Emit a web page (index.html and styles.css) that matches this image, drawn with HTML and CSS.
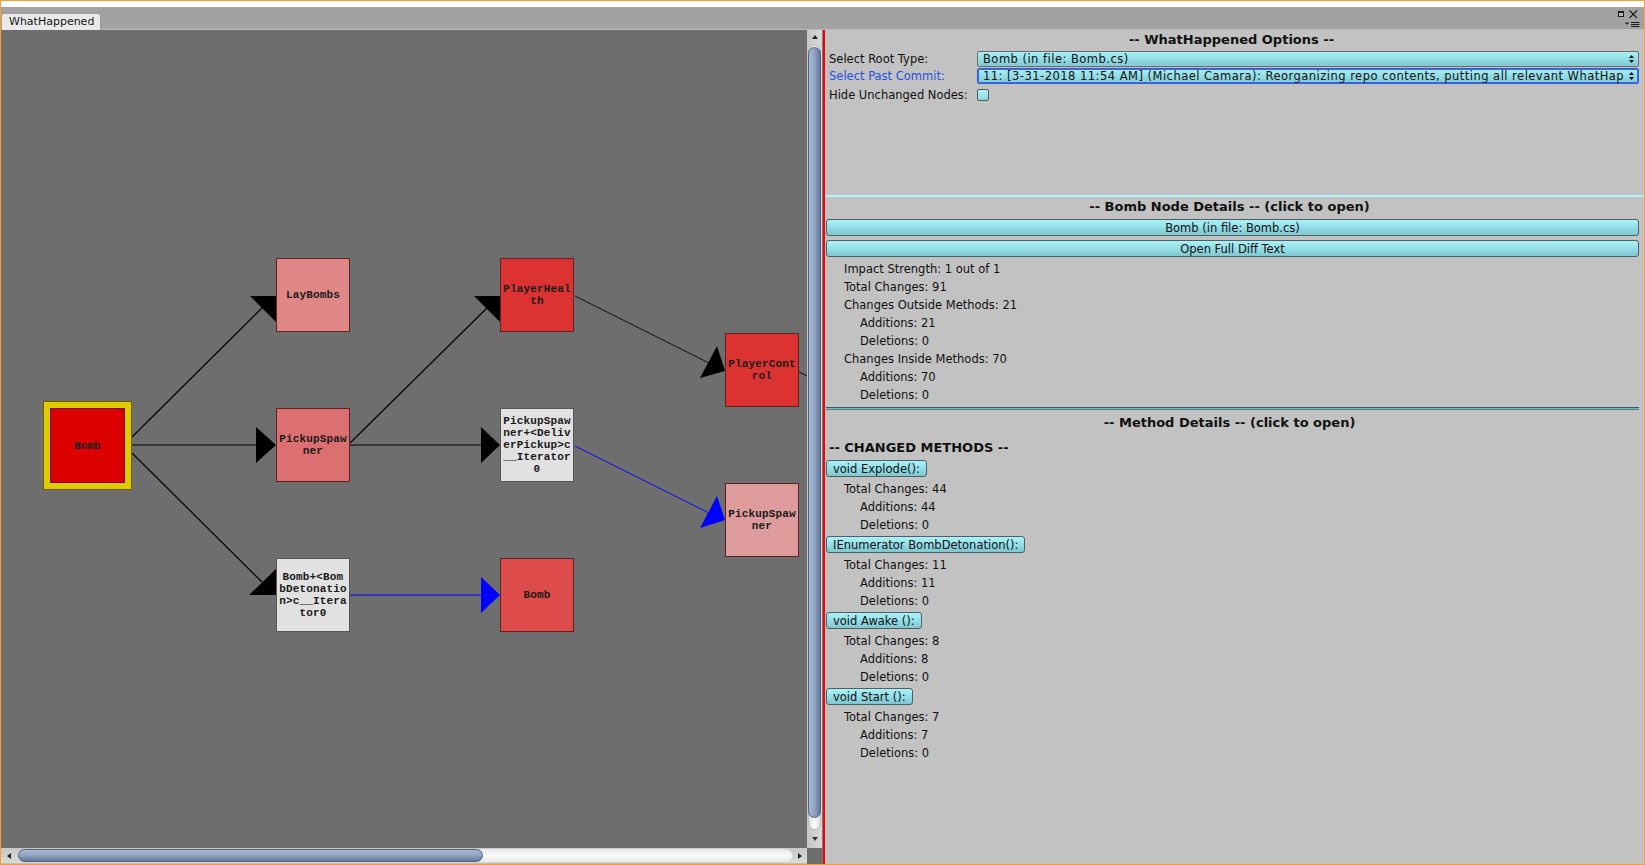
FILE: index.html
```html
<!DOCTYPE html>
<html>
<head>
<meta charset="utf-8">
<title>WhatHappened</title>
<link rel="stylesheet" href="styles.css">
</head>
<body>
<div class="frame">
  <div class="topstrip"></div>
  <div class="tabbar">
    <div class="tab">WhatHappened</div>
    <svg class="winctl" width="24" height="20" viewBox="0 0 24 20">
      <rect x="1" y="2" width="6" height="6" fill="#1e1e1e"/>
      <rect x="2" y="4" width="4" height="3" fill="#b9b9b9"/>
      <path d="M12.5 1.5 L20 9 M20 1.5 L12.5 9" stroke="#1e1e1e" stroke-width="1.1" fill="none"/>
      <path d="M8 13.5 L12 13.5 L10 16 Z" fill="#1e1e1e"/>
      <path d="M14 13.5 H22.5 M14 15.5 H22.5 M14 17.5 H22.5" stroke="#1e1e1e" stroke-width="1" fill="none"/>
    </svg>
  </div>
  <div class="main">
    <div class="graphpane">
      <div class="canvas">
        <svg class="edges" width="806" height="818" viewBox="0 0 806 818">
          <g stroke="#000" stroke-width="1.2" fill="none">
            <line x1="131" y1="407" x2="262" y2="277"/>
            <line x1="131" y1="415" x2="256" y2="415"/>
            <line x1="131" y1="423" x2="261" y2="552"/>
            <line x1="349" y1="413" x2="486" y2="278"/>
            <line x1="349" y1="415" x2="481" y2="415"/>
          </g>
          <g stroke="#000" stroke-width="0.9" fill="none">
            <line x1="574" y1="266" x2="708" y2="333"/>
            <line x1="798" y1="342" x2="806" y2="346"/>
          </g>
          <line x1="349" y1="565" x2="481" y2="565" stroke="#0000ff" stroke-width="1.1"/>
          <line x1="574" y1="416" x2="708" y2="483" stroke="#0000ff" stroke-width="0.9"/>
          <g fill="#000">
            <polygon points="249,266 275,266 275,292"/>
            <polygon points="255,397 255,433 275,415"/>
            <polygon points="248,565 275,539 275,565"/>
            <polygon points="473,266 499,266 499,292"/>
            <polygon points="480,397 480,433 499,415"/>
            <polygon points="716,316 699,348 724,341"/>
          </g>
          <g fill="#0000ff">
            <polygon points="480,547 480,583 499,565"/>
            <polygon points="716,466 699,498 724,490"/>
          </g>
        </svg>
        <div class="root-frame"><div class="node-inner">Bomb</div></div>
        <div class="node n-laybombs c-pink">LayBombs</div>
        <div class="node n-spawner c-salmon">PickupSpaw<br>ner</div>
        <div class="node n-detonation c-white">Bomb+&lt;Bom<br>bDetonatio<br>n&gt;c__Itera<br>tor0</div>
        <div class="node n-health c-red">PlayerHeal<br>th</div>
        <div class="node n-deliver c-white">PickupSpaw<br>ner+&lt;Deliv<br>erPickup&gt;c<br>__Iterator<br>0</div>
        <div class="node n-bomb2 c-red2">Bomb</div>
        <div class="node n-control c-red">PlayerCont<br>rol</div>
        <div class="node n-spawner2 c-rose">PickupSpaw<br>ner</div>
      </div>
      <div class="vscroll">
        <div class="sb-btn"><span class="tri-up"></span></div>
        <div class="vtrack"><div class="vthumb"></div></div>
        <div class="sb-btn sb-btn-down"><span class="tri-down"></span></div>
      </div>
      <div class="hscroll">
        <div class="sb-hbtn"><span class="tri-left"></span></div>
        <div class="htrack"><div class="hthumb"></div></div>
        <div class="sb-hbtn"><span class="tri-right"></span></div>
      </div>
      <div class="corner"></div>
    </div>
    <div class="divider"></div>
    <div class="panel">
      <section class="options">
        <div class="ptitle">-- WhatHappened Options --</div>
        <div class="field f1">
          <span class="flabel">Select Root Type:</span>
          <div class="dropdown"><span class="dd-text">Bomb (in file: Bomb.cs)</span><svg class="updown" width="5" height="8" viewBox="0 0 5 8"><path d="M2.5 0 L5 3 H0 Z M2.5 8 L5 5 H0 Z" fill="#111"/></svg></div>
        </div>
        <div class="field f2">
          <span class="flabel flabel-active">Select Past Commit:</span>
          <div class="dropdown dropdown-focus"><span class="dd-text">11: [3-31-2018 11:54 AM] (Michael Camara): Reorganizing repo contents, putting all relevant WhatHap</span><svg class="updown" width="5" height="8" viewBox="0 0 5 8"><path d="M2.5 0 L5 3 H0 Z M2.5 8 L5 5 H0 Z" fill="#111"/></svg></div>
        </div>
        <div class="field f3">
          <span class="flabel">Hide Unchanged Nodes:</span>
          <span class="checkbox"></span>
        </div>
      </section>
      <div class="sep-light"></div>
      <section class="details">
        <div class="ptitle t2">-- Bomb Node Details -- (click to open)</div>
        <div class="wbtn wb1">Bomb (in file: Bomb.cs)</div>
        <div class="wbtn wb2">Open Full Diff Text</div>
        <div class="rows r-first">
          <div class="row l1">Impact Strength: 1 out of 1</div>
          <div class="row l1">Total Changes: 91</div>
          <div class="row l1">Changes Outside Methods: 21</div>
          <div class="row l2">Additions: 21</div>
          <div class="row l2">Deletions: 0</div>
          <div class="row l1">Changes Inside Methods: 70</div>
          <div class="row l2">Additions: 70</div>
          <div class="row l2">Deletions: 0</div>
        </div>
      </section>
      <div class="sep-dark"></div>
      <section class="methods">
        <div class="ptitle t3">-- Method Details -- (click to open)</div>
        <div class="changed">-- CHANGED METHODS --</div>
        <div class="method">
          <div class="mbtn">void Explode():</div>
          <div class="row l1">Total Changes: 44</div>
          <div class="row l2">Additions: 44</div>
          <div class="row l2">Deletions: 0</div>
        </div>
        <div class="method">
          <div class="mbtn">IEnumerator BombDetonation():</div>
          <div class="row l1">Total Changes: 11</div>
          <div class="row l2">Additions: 11</div>
          <div class="row l2">Deletions: 0</div>
        </div>
        <div class="method">
          <div class="mbtn">void Awake ():</div>
          <div class="row l1">Total Changes: 8</div>
          <div class="row l2">Additions: 8</div>
          <div class="row l2">Deletions: 0</div>
        </div>
        <div class="method">
          <div class="mbtn">void Start ():</div>
          <div class="row l1">Total Changes: 7</div>
          <div class="row l2">Additions: 7</div>
          <div class="row l2">Deletions: 0</div>
        </div>
      </section>
    </div>
  </div>
</div>
</body>
</html>
```

FILE: styles.css
```css
* { box-sizing: border-box; }
html, body { margin: 0; padding: 0; }
body {
  width: 1645px;
  height: 865px;
  overflow: hidden;
  background: #fff;
  font-family: "DejaVu Sans", "Verdana", sans-serif;
  font-size: 11.5px;
  color: #111;
}
.frame {
  width: 1645px;
  height: 865px;
  border: 1px solid #f5a235;
  display: flex;
  flex-direction: column;
}
.topstrip { height: 6px; flex: none; background: #fff; }
.tabbar {
  height: 23px;
  flex: none;
  background: #a2a2a2;
  border-bottom: 1px solid #bdbdbd;
  display: flex;
  justify-content: space-between;
  align-items: flex-end;
}
.tab {
  height: 17px;
  margin-bottom: -1px;
  padding: 0 6px 0 7px;
  line-height: 16px;
  background: #e9e9e9;
  border: 1px solid #9c9c9c;
  border-bottom: none;
  border-radius: 3px 3px 0 0;
  color: #151515;
  font-size: 11px;
}
.winctl { align-self: flex-start; margin-top: 2px; margin-right: 3px; }

.main { flex: 1; display: flex; min-height: 0; }
.graphpane {
  width: 822px;
  flex: none;
  display: grid;
  grid-template-columns: 806px 16px;
  grid-template-rows: 818px 1fr;
}
.canvas { position: relative; background: #6e6e6e; overflow: hidden; }
.edges { position: absolute; left: 0; top: 0; }

.node {
  position: absolute;
  width: 74px;
  height: 74px;
  border: 1px solid #5e2323;
  display: flex;
  align-items: center;
  justify-content: center;
  text-align: center;
  font: bold 11px/12px "Liberation Mono", "DejaVu Sans Mono", monospace;
  color: #1a1a1a;
  letter-spacing: 0.15px;
}
.root-frame {
  position: absolute;
  left: 42px;
  top: 371px;
  width: 89px;
  height: 89px;
  padding: 6px;
  background: #dfcb00;
  border: 1px solid #6a6000;
}
.node-inner {
  width: 75px;
  height: 75px;
  background: #dd0000;
  border: 1px solid #6b1212;
  display: flex;
  align-items: center;
  justify-content: center;
  font: bold 11px/12px "Liberation Mono", "DejaVu Sans Mono", monospace;
  color: #1a1a1a;
}
.n-laybombs { left: 275px; top: 228px; }
.n-spawner { left: 275px; top: 378px; }
.n-detonation { left: 275px; top: 528px; }
.n-health { left: 499px; top: 228px; }
.n-deliver { left: 499px; top: 378px; }
.n-bomb2 { left: 499px; top: 528px; }
.n-control { left: 724px; top: 303px; }
.n-spawner2 { left: 724px; top: 453px; }
.c-pink { background: #df8787; }
.c-salmon { background: #dc6f6f; }
.c-red { background: #dc3232; }
.c-red2 { background: #dd4b4b; }
.c-rose { background: #de9b9b; }
.c-white { background: #e1e1e1; border-color: #555; }

/* scrollbars */
.vscroll {
  display: flex;
  flex-direction: column;
  background: linear-gradient(to right, #c6c6c6, #d8d8d8);
  border-right: 1px solid #7a7a7a;
}
.sb-btn { height: 13px; flex: none; display: flex; align-items: center; justify-content: center; }
.sb-btn-down { height: 18px; }
.vtrack {
  flex: 1;
  margin: 2px 1px 0;
  border-radius: 7px;
  background: linear-gradient(to right, #dcdcdc, #fbfbfb 50%, #e2e2e2);
  border: 1px solid #bcbcbc;
}
.vthumb {
  height: 771px;
  margin: 1px -1px 0;
  border-radius: 7px;
  border: 1px solid #4f6184;
  background: linear-gradient(to right, #a9b9d2, #93a6c4 45%, #7488ab 80%, #647898);
}
.tri-up { width: 0; height: 0; border-left: 3px solid transparent; border-right: 3px solid transparent; border-bottom: 4px solid #222; }
.tri-down { width: 0; height: 0; border-left: 3px solid transparent; border-right: 3px solid transparent; border-top: 4px solid #333; }
.hscroll {
  display: flex;
  background: linear-gradient(#c8c8c8, #dadada);
  border-bottom: 1px solid #bcbcbc;
}
.sb-hbtn { width: 15px; flex: none; display: flex; align-items: center; justify-content: center; }
.tri-left { width: 0; height: 0; border-top: 3px solid transparent; border-bottom: 3px solid transparent; border-right: 4px solid #222; }
.tri-right { width: 0; height: 0; border-top: 3px solid transparent; border-bottom: 3px solid transparent; border-left: 4px solid #222; }
.htrack {
  flex: 1;
  margin: 1px 0 1px 2px;
  border-radius: 7px;
  background: linear-gradient(#e6e6e6, #fbfbfb 50%, #e8e8e8);
}
.hthumb {
  width: 465px;
  height: 100%;
  border-radius: 7px;
  border: 1px solid #4f6184;
  background: linear-gradient(#a9b9d2, #93a6c4 45%, #7488ab 80%, #647898);
}
.corner { background: #6e6e6e; border-right: 1px solid #7a7a7a; }

.divider { width: 2px; flex: none; background: #ff0000; }

/* right panel */
.panel {
  flex: 1;
  min-width: 0;
  overflow: hidden;
  background: #c2c2c2;
  display: flex;
  flex-direction: column;
}
.options { height: 165px; flex: none; padding-top: 1px; }
.ptitle {
  height: 18px;
  line-height: 18px;
  text-align: center;
  font-weight: bold;
  font-size: 13px;
  color: #111;
  padding-right: 6px;
}
.field {
  display: flex;
  align-items: center;
  padding-left: 4px;
  padding-right: 5px;
}
.f1 { height: 16px; margin-top: 2px; }
.f2 { height: 16px; margin-top: 1px; }
.f3 { height: 18px; margin-top: 2px; }
.flabel { width: 148px; flex: none; line-height: 16px; white-space: nowrap; }
.flabel-active { color: #2452e0; }
.dropdown {
  flex: 1;
  min-width: 0;
  height: 16px;
  display: flex;
  align-items: center;
  padding: 0 4px 0 5px;
  border: 1px solid #6b6b6b;
  border-radius: 2px;
  background: linear-gradient(#a9f0f7, #8fd9e2 60%, #82c9d2);
}
.dropdown-focus { border: 1px solid #2f5fe0; box-shadow: inset 0 0 0 1px #3c6be6; }
.dd-text { flex: 1; min-width: 0; white-space: nowrap; overflow: hidden; line-height: 14px; letter-spacing: 0.48px; }
.updown { flex: none; margin-left: 2px; }
.checkbox {
  width: 12px;
  height: 12px;
  border: 1px solid #5a5a5a;
  border-radius: 2px;
  background: linear-gradient(#aef2f8, #8ed7df);
}
.sep-light { height: 2px; flex: none; background: #aef4fd; }

.details { padding: 0 5px 0 1px; }
.t2 { margin-top: 1px; }
.wbtn {
  height: 17px;
  line-height: 16px;
  text-align: center;
  border: 1px solid #4f5f62;
  border-radius: 3px;
  background: linear-gradient(#a9f2f9, #92dce5 55%, #7fc6cf);
}
.wb1 { margin-top: 3px; }
.wb2 { margin-top: 4px; }
.rows { margin-top: 3px; }
.row { height: 18px; line-height: 19px; white-space: nowrap; }
.l1 { padding-left: 18px; }
.l2 { padding-left: 34px; }

.sep-dark {
  height: 3px;
  flex: none;
  margin: 3px 5px 0 1px;
  background: #78b9bf;
  border-top: 1px solid #2f5f63;
  border-bottom: 1px solid #4e8287;
}
.methods { padding: 0 5px 0 1px; }
.t3 { margin-top: 4px; }
.changed {
  height: 19px;
  line-height: 19px;
  margin-top: 6px;
  padding-left: 3px;
  font-weight: bold;
  font-size: 13px;
}
.method { padding-top: 3px; }
.mbtn {
  display: inline-block;
  height: 17px;
  line-height: 16px;
  padding: 0 6px;
  margin-bottom: 2px;
  border: 1px solid #4f5f62;
  border-radius: 3px;
  background: linear-gradient(#a9f2f9, #92dce5 55%, #7fc6cf);
  vertical-align: top;
}
.method .row { line-height: 20px; }
```
